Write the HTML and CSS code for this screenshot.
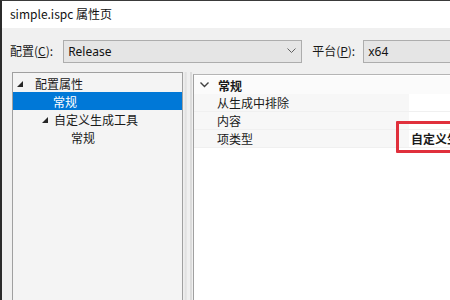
FILE: index.html
```html
<!DOCTYPE html>
<html lang="zh-CN">
  <head>
    <meta charset="UTF-8" />
    <title>simple.ispc 属性页</title>
    <link rel="stylesheet" href="styles.css">
  </head>
  <body>
    <div class="window">
      <div class="titlebar">simple.ispc 属性页</div>

      <div class="toolbar">
        <label class="field-label">配置(<u>C</u>):</label>
        <div class="combo combo-config">
          <span>Release</span>
          <svg class="chevron" width="9" height="6" viewBox="0 0 9 6">
            <polyline points="0.5,0.5 4.5,4.5 8.5,0.5" fill="none" stroke="#606060" stroke-width="1"/>
          </svg>
        </div>
        <label class="field-label platform">平台(<u>P</u>):</label>
        <div class="combo combo-platform"><span>x64</span></div>
      </div>

      <div class="main">
        <div class="tree">
          <div class="tree-row">
            <svg class="expander" width="6" height="6" viewBox="0 0 6 6"><polygon points="6,0 6,6 0,6" fill="#262626"/></svg>
            <span>配置属性</span>
          </div>
          <div class="tree-row selected indent-1"><span>常规</span></div>
          <div class="tree-row indent-1">
            <svg class="expander" width="6" height="6" viewBox="0 0 6 6"><polygon points="6,0 6,6 0,6" fill="#262626"/></svg>
            <span>自定义生成工具</span>
          </div>
          <div class="tree-row indent-2"><span>常规</span></div>
        </div>

        <div class="splitter"></div>

        <div class="grid">
          <div class="grid-row category">
            <svg class="cat-chevron" width="9" height="6" viewBox="0 0 9 6">
              <polyline points="0.5,0.5 4.5,4.5 8.5,0.5" fill="none" stroke="#404040" stroke-width="1.4"/>
            </svg>
            <span>常规</span>
          </div>
          <div class="grid-row prop">
            <span class="prop-name">从生成中排除</span>
            <span class="prop-value"></span>
          </div>
          <div class="grid-row prop">
            <span class="prop-name">内容</span>
            <span class="prop-value"></span>
          </div>
          <div class="grid-row prop">
            <span class="prop-name">项类型</span>
            <span class="prop-value bold">自定义生成工具</span>
          </div>
          <div class="highlight"></div>
        </div>
      </div>
    </div>
  </body>
</html>
```

FILE: styles.css
```css
* {
  margin: 0;
  padding: 0;
  box-sizing: border-box;
}
body {
  width: 450px;
  height: 300px;
  overflow: hidden;
  font-family: "Noto Sans CJK SC", "Noto Sans", sans-serif;
  font-size: 12px;
  color: #1a1a1a;
  background: #f0f0f0;
}
.window {
  width: 450px;
  height: 300px;
  display: flex;
  flex-direction: column;
  border-top: 1px solid #3a3a3a;
  border-left: 2px solid #2b2b2b;
  background: #f0f0f0;
}
.titlebar {
  height: 27px;
  background: #fff;
  padding-left: 8px;
  line-height: 26px;
  font-size: 12px;
  color: #111;
}
.toolbar {
  height: 44px;
  display: flex;
  align-items: center;
  padding: 2px 0 0 8px;
}
.field-label {
  line-height: 22px;
  margin-right: 10px;
}
.field-label u {
  text-decoration: underline;
  text-underline-offset: 1px;
}
.field-label.platform {
  margin-left: 10px;
  margin-right: 8px;
}
.combo {
  height: 23px;
  background: #e5e5e5;
  border: 1px solid #adadad;
  display: flex;
  align-items: center;
  padding-left: 4px;
  color: #111;
}
.combo-config {
  width: 239px;
  justify-content: space-between;
  padding-right: 5px;
}
.combo-config span {
  font-family: "Noto Sans", sans-serif;
}
.combo-platform {
  flex: 1;
  margin-right: -4px;
}
.combo-platform span {
  font-family: "Noto Sans", sans-serif;
}
.main {
  flex: 1;
  display: flex;
  padding-left: 10px;
}
.tree {
  width: 171px;
  background: #f4f4f4;
  border: 1px solid #a0a0a0;
  border-bottom: none;
  padding-top: 1px;
}
.tree-row {
  height: 18px;
  display: flex;
  align-items: center;
  padding-left: 4px;
  white-space: nowrap;
}
.tree-row .expander {
  margin-right: 12px;
  margin-top: 1px;
}
.tree-row.indent-1 {
  padding-left: 28px;
}
.tree-row.indent-1 .expander {
  margin-right: 6px;
}
.tree-row.indent-1:has(.expander) {
  padding-left: 29px;
}
.tree-row.indent-2 {
  padding-left: 58px;
}
.tree-row.selected {
  background: #0078d7;
  color: #fff;
  padding-left: 40px;
}
.splitter {
  width: 10px;
  background: linear-gradient(90deg, #f0f0f0 0, #e8e8e8 2px, #dcdcdc 3px, #f0f0f0 4px, #f0f0f0 7px, #c8c8c8 8px, #f0f0f0 9px);
}
.grid {
  flex: 1;
  position: relative;
  margin-top: 2px;
  background: #fff;
  border-left: 1px solid #a0a0a0;
  border-top: 1px solid #b5b5b5;
  padding-top: 1px;
  overflow: hidden;
}
.grid-row {
  height: 18px;
  display: flex;
  align-items: center;
  white-space: nowrap;
}
.grid-row.category {
  padding-left: 6px;
  font-weight: bold;
  background: #fbfbfb;
}
.cat-chevron {
  margin-right: 9px;
}
.grid-row.prop {
  border-bottom: 1px solid #f0f0f0;
}
.prop-name {
  width: 215px;
  padding-left: 23px;
  flex-shrink: 0;
  background: #f7f7f7;
  height: 100%;
  display: flex;
  align-items: center;
}
.prop-value {
  flex: 1;
  height: 100%;
  display: flex;
  align-items: center;
  padding-left: 2px;
  background: #fff;
}
.prop-value.bold {
  font-weight: bold;
}
.highlight {
  position: absolute;
  left: 202px;
  top: 46px;
  width: 70px;
  height: 32px;
  border: 3px solid #e0303c;
  border-radius: 1px;
}
```
